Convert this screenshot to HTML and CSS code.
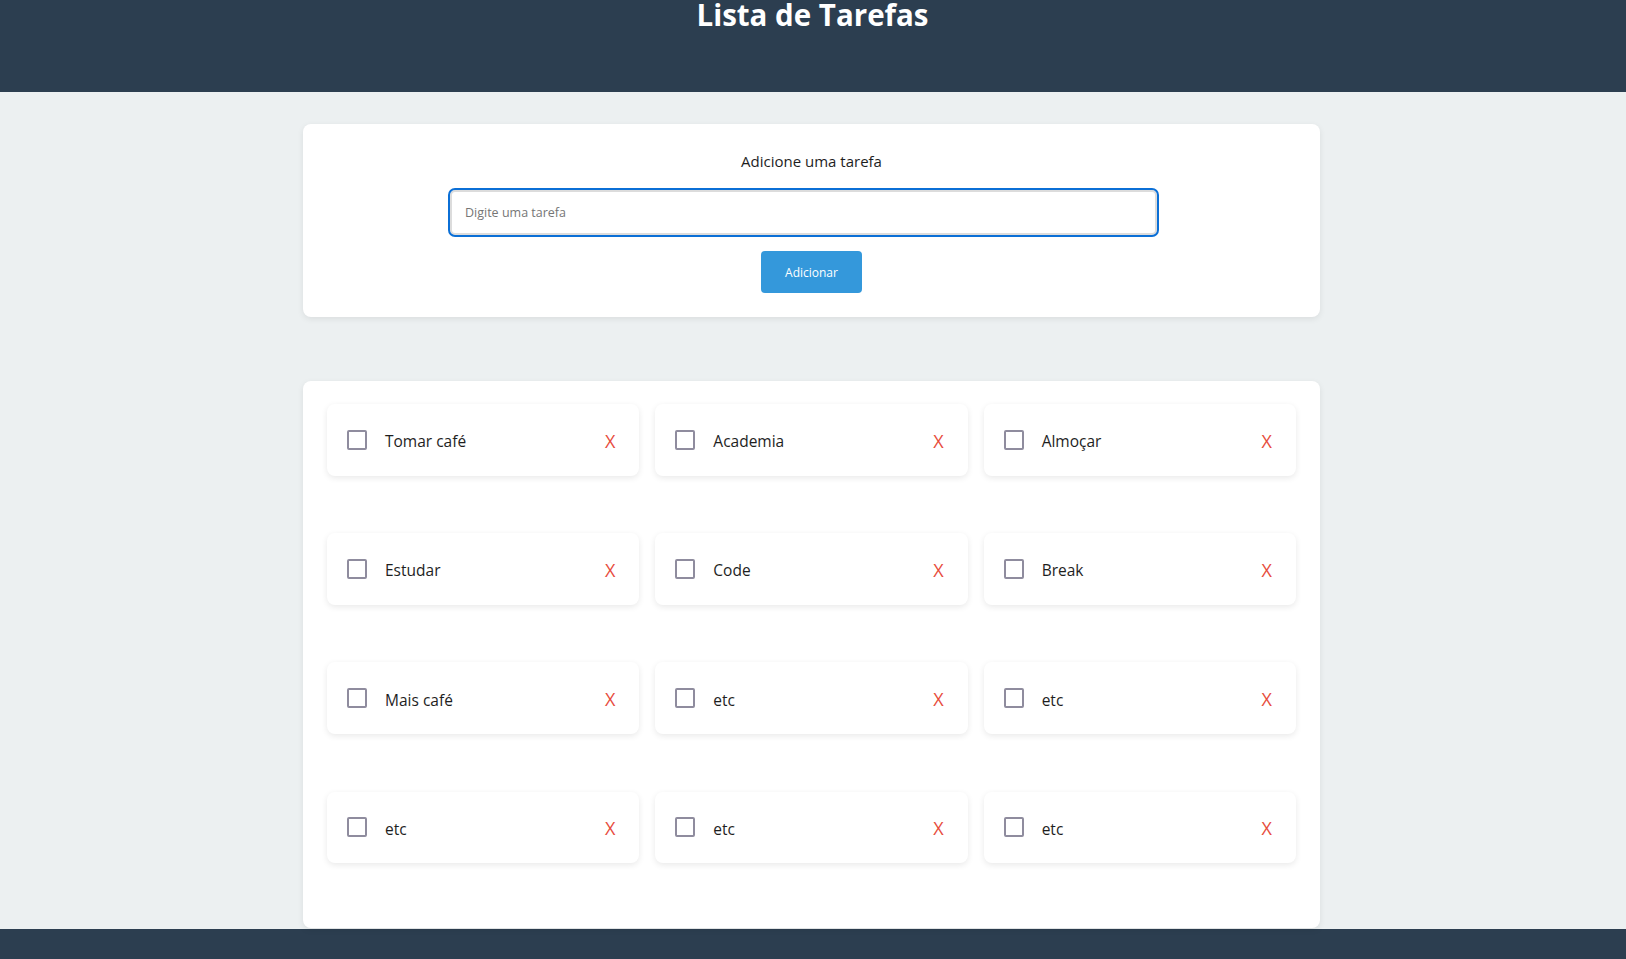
FILE: index.html
```html
<!DOCTYPE html>
<html lang="pt-BR">
<head>
<meta charset="utf-8">
<title>Lista de Tarefas</title>
<link rel="stylesheet" href="styles.css">
</head>
<body>
<header class="topbar">
  <h1 class="title">Lista de Tarefas</h1>
</header>
<main class="main">
  <section class="card form-card">
    <label class="form-label" for="task">Adicione uma tarefa</label>
    <input class="task-input" id="task" type="text" placeholder="Digite uma tarefa">
    <button class="add-btn" type="button">Adicionar</button>
  </section>
  <section class="card list-card">
    <ul class="task-grid">
      <li class="task"><input class="check" type="checkbox"><span class="task-text">Tomar café</span><button class="del" type="button">X</button></li>
      <li class="task"><input class="check" type="checkbox"><span class="task-text">Academia</span><button class="del" type="button">X</button></li>
      <li class="task"><input class="check" type="checkbox"><span class="task-text">Almoçar</span><button class="del" type="button">X</button></li>
      <li class="task"><input class="check" type="checkbox"><span class="task-text">Estudar</span><button class="del" type="button">X</button></li>
      <li class="task"><input class="check" type="checkbox"><span class="task-text">Code</span><button class="del" type="button">X</button></li>
      <li class="task"><input class="check" type="checkbox"><span class="task-text">Break</span><button class="del" type="button">X</button></li>
      <li class="task"><input class="check" type="checkbox"><span class="task-text">Mais café</span><button class="del" type="button">X</button></li>
      <li class="task"><input class="check" type="checkbox"><span class="task-text">etc</span><button class="del" type="button">X</button></li>
      <li class="task"><input class="check" type="checkbox"><span class="task-text">etc</span><button class="del" type="button">X</button></li>
      <li class="task"><input class="check" type="checkbox"><span class="task-text">etc</span><button class="del" type="button">X</button></li>
      <li class="task"><input class="check" type="checkbox"><span class="task-text">etc</span><button class="del" type="button">X</button></li>
      <li class="task"><input class="check" type="checkbox"><span class="task-text">etc</span><button class="del" type="button">X</button></li>
    </ul>
  </section>
</main>
<footer class="footer"></footer>
</body>
</html>
```
FILE: styles.css
```css
* { box-sizing: border-box; }

html, body {
  margin: 0;
  padding: 0;
  overflow: hidden;
}

body {
  background: #ecf0f1;
  font-family: "Open Sans", "Noto Sans", "DejaVu Sans", sans-serif;
  color: #1e1e1e;
}

.topbar {
  height: 92px;
  background: #2c3e50;
  display: flex;
  justify-content: center;
  padding-right: 1px;
}

.title {
  margin: 0;
  font-size: 29.5px;
  line-height: 30px;
  font-weight: 700;
  color: #ffffff;
}

.main {
  padding: 32px 3px 1px 0;
  display: flex;
  flex-direction: column;
  align-items: center;
  gap: 64px;
}

.card {
  width: 1017px;
  background: #ffffff;
  border-radius: 8px;
  box-shadow: 0 2px 6px rgba(0, 0, 0, 0.08);
}

.form-card {
  height: 193px;
  padding: 27px 24px 24px;
  display: flex;
  flex-direction: column;
  align-items: center;
}

.form-label {
  font-size: 15px;
  line-height: 20px;
  margin-bottom: 19px;
}

.task-input {
  width: 707px;
  height: 45px;
  margin-right: 16px;
  border: 2px solid #dcdcdc;
  border-radius: 5px;
  outline: 2px solid #0b6fd6;
  padding: 0 13px;
  font-family: inherit;
  font-size: 12.5px;
  color: #333;
  background: #fff;
}

.task-input::placeholder {
  color: #767676;
}

.add-btn {
  margin-top: 16px;
  width: 101px;
  height: 42px;
  border: none;
  border-radius: 4px;
  background: #3498db;
  color: #ffffff;
  font-family: inherit;
  font-size: 12px;
  padding: 0;
}

.list-card {
  height: 547px;
  padding: 23px 24px 64px;
}

.task-grid {
  list-style: none;
  margin: 0;
  padding: 0;
  display: grid;
  grid-template-columns: repeat(3, 1fr);
  grid-auto-rows: 71.5px;
  column-gap: 16px;
  row-gap: 57.7px;
}

.task {
  display: flex;
  align-items: center;
  padding: 0 24px 0 20px;
  background: #ffffff;
  border-radius: 8px;
  box-shadow: 0 2px 6px rgba(0, 0, 0, 0.09);
}

.check {
  appearance: none;
  -webkit-appearance: none;
  margin: 0;
  width: 20px;
  height: 20px;
  border: 2px solid #8f8c9e;
  border-radius: 2px;
  background: #fff;
  flex: none;
}

.task-text {
  flex: 1;
  margin-left: 18px;
  margin-top: 3px;
  font-size: 15.5px;
  line-height: 20px;
  color: #1e1e1e;
}

.del {
  border: none;
  background: none;
  padding: 0;
  margin-top: 2px;
  font-family: inherit;
  font-size: 18px;
  line-height: 20px;
  color: #e74c3c;
}

.footer {
  height: 30px;
  background: #2c3e50;
}
```
